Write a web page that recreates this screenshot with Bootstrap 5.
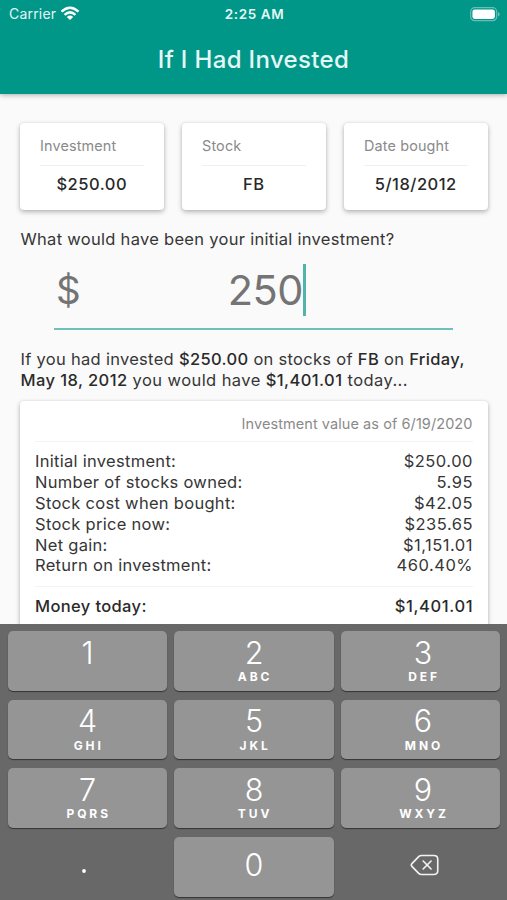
<!DOCTYPE html>
<html lang="en">
<head>
<meta charset="utf-8">
<meta name="viewport" content="width=device-width, initial-scale=1">
<title>If I Had Invested</title>
<link href="https://cdn.jsdelivr.net/npm/bootstrap@5.3.0/dist/css/bootstrap.min.css" rel="stylesheet">
<style>
  body { font-family: Inter, "Liberation Sans", sans-serif; background: #fafafa; color: #363636; height: 900px; line-height: 20.8px; font-size: 16.5px; letter-spacing: .29px; }
  b, .strong-row { font-weight: 550; color: #2a2a2a; letter-spacing: .36px; }
  .app-head { height: 94px; background: #009688; color: #e4f7f5; box-shadow: 0 1px 5px rgba(0,0,0,.32); z-index: 1; }
  .status-bar { height: 27px; font-size: 13.5px; padding: 1px 7px 0 9px; }
  .status-bar > * { flex: 1 1 0; }
  .carrier { font-size: 14px; letter-spacing: .2px; }
  .clock { font-weight: 600; letter-spacing: .6px; }
  .app-title { height: 67px; font-size: 24px; font-weight: 500; letter-spacing: .35px; padding-bottom: 1px; }
  .app-main { height: 530px; padding: 29px 19.5px 0 20px; }
  .tiles { gap: 18.5px; height: 87px; }
  .paper { background: #fff; border-radius: 4px; box-shadow: 0 2px 5px rgba(0,0,0,.28), 0 0 2px rgba(0,0,0,.1); }
  .tile { padding: 13px 20px 0; }
  .tile-label { font-size: 14.4px; color: #8a8a8a; letter-spacing: .15px; padding-bottom: 8px; border-bottom: 1px solid #f0f0f0; }
  .tile-value { font-size: 16.5px; font-weight: 550; color: #292929; padding-top: 8px; letter-spacing: .5px; }
  .question { margin: 19px 0 0 .5px; }
  .amount { width: 399px; height: 80px; margin-left: 34px; border-bottom: 2px solid #6fc0b8; font-size: 41.5px; letter-spacing: -.5px; color: #747474; line-height: 52px; padding-top: 14px; }
  .amount-sign { width: 51px; padding-left: 2px; font-size: 38.5px; }
  .amount-value { border-right: 3px solid #52b3a9; height: 52px; width: 201px; }
  .summary { margin: 19px 0 0 .5px; }
  .summary-end { letter-spacing: .42px; }
  .report { height: 260px; margin-top: 11px; padding: 13px 15px 0; }
  .report-date { font-size: 14.5px; color: #8a8a8a; letter-spacing: .07px; height: 28px; border-bottom: 1px solid #f3f3f3; }
  .figures { padding: 9px 0 9.5px; border-bottom: 1px solid #f3f3f3; }
  .figures span + span { letter-spacing: .5px; margin-right: -.5px; }
  .strong-row { padding-top: 9.5px; }
  .strong-row span + span { letter-spacing: .6px; margin-right: -.6px; }
  .keypad { height: 276px; background: #686868; z-index: 2; padding: 7px 7px 3.5px 8px; gap: 8.8px 7.2px; display: grid; grid-template: repeat(4, 1fr) / repeat(3, 1fr); letter-spacing: 0; }
  .key { border-radius: 5px; color: #fff; }
  .key:nth-child(3n) { padding-left: 5px; }
  .key-face { background: #959595; box-shadow: 0 1px 1px rgba(0,0,0,.5); }
  .digit { font-size: 30.5px; line-height: 32px; font-weight: 340; padding-top: 5.6px; }
  .letters { font-size: 12px; line-height: 14px; font-weight: 700; letter-spacing: 2.9px; margin-right: -2.2px; padding-top: 1.4px; }
</style>
<script src="https://cdn.jsdelivr.net/npm/bootstrap@5.3.0/dist/js/bootstrap.bundle.min.js"></script>
</head>
<body class="d-flex flex-column overflow-hidden">
<header class="app-head position-relative flex-shrink-0">
  <div class="status-bar d-flex align-items-center">
    <div class="d-flex align-items-center carrier">Carrier
      <svg class="ms-1" width="20" height="15" viewBox="0 0 20 15" fill="none" stroke="#fff" stroke-width="2.5"><path d="M1.5 5.7Q10-2.3 18.5 5.7M4.6 8.9Q10 3.9 15.4 8.9"/><path d="M10 14.1 6.8 10.9Q10 8.2 13.2 10.9Z" fill="#fff" stroke="none"/></svg>
    </div>
    <div class="text-center clock">2:25 AM</div>
    <div class="d-flex justify-content-end">
      <svg width="30" height="15" viewBox="0 0 30 15"><rect x=".7" y=".7" width="26" height="13" rx="4" fill="none" stroke="#69beb6" stroke-width="1.2"/><rect x="2.4" y="2.5" width="22.5" height="9.4" rx="2.3" fill="#fff"/><path d="M28 5v4.6q1.7-1 1.7-2.3T28 5" fill="#69beb6"/></svg>
    </div>
  </div>
  <div class="app-title d-flex align-items-center justify-content-center">If I Had Invested</div>
</header>
<main class="app-main flex-shrink-0 overflow-hidden">
  <div class="tiles d-flex">
    <div class="paper tile flex-fill w-100"><div class="tile-label">Investment</div><div class="tile-value text-center">$250.00</div></div>
    <div class="paper tile flex-fill w-100"><div class="tile-label">Stock</div><div class="tile-value text-center">FB</div></div>
    <div class="paper tile flex-fill w-100"><div class="tile-label text-nowrap">Date bought</div><div class="tile-value text-center">5/18/2012</div></div>
  </div>
  <div class="question text-nowrap">What would have been your initial investment?</div>
  <div class="amount d-flex"><span class="amount-sign">$</span><span class="amount-value text-end">250</span></div>
  <div class="summary text-nowrap">If you had invested <b>$250.00</b> on stocks of <b>FB</b> on <b>Friday,</b><br><span class="summary-end"><b class="summary-end">May 18, 2012</b> you would have <b class="summary-end">$1,401.01</b> today...</span></div>
  <section class="paper report">
    <div class="report-date text-end">Investment value as of 6/19/2020</div>
    <div class="figures">
      <div class="d-flex justify-content-between"><span>Initial investment:</span><span>$250.00</span></div>
      <div class="d-flex justify-content-between"><span>Number of stocks owned:</span><span>5.95</span></div>
      <div class="d-flex justify-content-between"><span>Stock cost when bought:</span><span>$42.05</span></div>
      <div class="d-flex justify-content-between"><span>Stock price now:</span><span>$235.65</span></div>
      <div class="d-flex justify-content-between"><span>Net gain:</span><span>$1,151.01</span></div>
      <div class="d-flex justify-content-between"><span>Return on investment:</span><span>460.40%</span></div>
    </div>
    <div class="strong-row d-flex justify-content-between"><span>Money today:</span><span>$1,401.01</span></div>
  </section>
</main>
<footer class="keypad position-relative flex-shrink-0 text-center">
  <div class="key key-face"><div class="digit">1</div></div>
  <div class="key key-face"><div class="digit">2</div><div class="letters">ABC</div></div>
  <div class="key key-face"><div class="digit">3</div><div class="letters">DEF</div></div>
  <div class="key key-face"><div class="digit">4</div><div class="letters">GHI</div></div>
  <div class="key key-face"><div class="digit">5</div><div class="letters">JKL</div></div>
  <div class="key key-face"><div class="digit">6</div><div class="letters">MNO</div></div>
  <div class="key key-face"><div class="digit">7</div><div class="letters">PQRS</div></div>
  <div class="key key-face"><div class="digit">8</div><div class="letters">TUV</div></div>
  <div class="key key-face"><div class="digit">9</div><div class="letters">WXYZ</div></div>
  <div class="key d-flex align-items-center justify-content-center pe-2 pt-2"><svg width="4" height="4"><circle cx="2" cy="2" r="1.9" fill="#fff"/></svg></div>
  <div class="key key-face d-flex align-items-center justify-content-center pb-1"><div class="digit pt-0">0</div></div>
  <div class="key d-flex align-items-center justify-content-center pb-1">
    <svg class="ms-1" width="29" height="22" viewBox="0 0 30 22" fill="none" stroke="#f2f2f2" stroke-width="1.7" stroke-linejoin="round" stroke-linecap="round"><path d="M12 1.2H24.5Q28.7 1.2 28.7 5V17Q28.7 20.8 24.5 20.8H12Q10.2 20.8 9 19.6L2 12.4Q.6 11 2 9.6L9 2.4Q10.2 1.2 12 1.2Z"/><path d="m13.6 6.9 8.2 8.2m0-8.2-8.2 8.2"/></svg>
  </div>
</footer>
</body>
</html>
